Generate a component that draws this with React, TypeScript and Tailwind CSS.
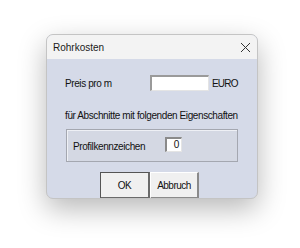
import React from "react";

const font = { fontFamily: '"Liberation Sans", Arial, sans-serif' };

const App = () => {
  return (
    <div className="w-[300px] h-[248px] bg-white pt-[34px] pl-[46px]" style={font}>
      <div className="w-[212px] h-[165px] rounded-[7px] border border-[#c4c4c4] bg-[#d5dae8] overflow-hidden shadow-[0_10px_28px_rgba(0,0,0,0.28)] flex flex-col">
        {/* title bar */}
        <div className="h-[24px] bg-[#f3f3f3] flex items-center justify-between pl-[6px] pr-[6px] shrink-0">
          <span className="text-[10px] text-[#1a1a1a]">Rohrkosten</span>
          <svg width="11" height="11" viewBox="0 0 11 11" className="text-[#333]">
            <path d="M1 1L10 10M10 1L1 10" stroke="currentColor" strokeWidth="1" />
          </svg>
        </div>

        {/* body */}
        <div className="flex flex-col pl-[18px] pt-[16px] text-[10px] tracking-[-0.4px] text-[#111]">
          <div className="flex items-center h-[16px]">
            <span className="w-[85px]">Preis pro m</span>
            <div className="w-[59px] h-[16px] bg-white border-t-2 border-l-2 border-t-[#9a9a9a] border-l-[#9a9a9a] border-b border-r border-b-[#e4e4e4] border-r-[#e4e4e4]" />
            <span className="ml-[3px] tracking-[-0.8px]">EURO</span>
          </div>

          <div className="mt-[18px] h-[14px] leading-[14px]">für Abschnitte mit folgenden Eigenschaften</div>

          <div className="mt-[6px] ml-[1px] w-[172px] h-[33px] border border-[#a4a7b0] shadow-[inset_1px_1px_0_#eef0f5] bg-[#d4d8e3] flex items-center pl-[6px]">
            <span className="w-[92px] mt-[2px]">Profilkennzeichen</span>
            <div className="w-[17px] h-[15px] bg-white border-t-2 border-l-2 border-t-[#8a8a8a] border-l-[#8a8a8a] border-b border-r border-b-[#e4e4e4] border-r-[#e4e4e4] flex items-start justify-end pr-[2px] text-[10px] leading-[11px] -mt-[3px]">
              0
            </div>
          </div>

          <div className="mt-[10px] ml-[35px] flex">
            <button className="w-[50px] h-[27px] bg-[#f0f0f0] border border-[#555] border-r-2 border-b-2 border-r-[#6a6a6a] border-b-[#6a6a6a] text-[10px] tracking-[-0.5px] flex items-center justify-center">
              OK
            </button>
            <button className="w-[49px] h-[27px] bg-[#f0f0f0] border-t border-l border-t-white border-l-white border-r-2 border-b-2 border-r-[#8a8a8a] border-b-[#8a8a8a] text-[10px] tracking-[-0.5px] flex items-center justify-center">
              Abbruch
            </button>
          </div>
        </div>
      </div>
    </div>
  );
};

export default App;
